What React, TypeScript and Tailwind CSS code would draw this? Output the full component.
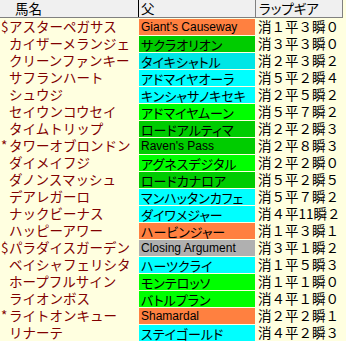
const ORANGE = 'bg-[#ff8040]';
const GREEN = 'bg-[#00ff00]';
const DARK_GREEN = 'bg-[#00cc00]';
const CYAN = 'bg-[#00ffff]';
const CYAN_DIM = 'bg-[#00e6e6]';
const GRAY = 'bg-[#b0b0b0]';

type Row = { mark: string; name: string; sire: string; latin?: boolean; color: string; gear: string };

const ROWS: Row[] = [
  { mark: '$', name: 'アスターペガサス', sire: "Giant's Causeway", latin: true, color: ORANGE, gear: '消１平３瞬０' },
  { mark: '', name: 'カイザーメランジェ', sire: 'サクラオリオン', color: DARK_GREEN, gear: '消３平３瞬０' },
  { mark: '', name: 'クリーンファンキー', sire: 'タイキシャトル', color: CYAN_DIM, gear: '消２平３瞬２' },
  { mark: '', name: 'サフランハート', sire: 'アドマイヤオーラ', color: CYAN, gear: '消５平２瞬４' },
  { mark: '', name: 'シュウジ', sire: 'キンシャサノキセキ', color: CYAN, gear: '消２平５瞬２' },
  { mark: '', name: 'セイウンコウセイ', sire: 'アドマイヤムーン', color: GREEN, gear: '消５平７瞬２' },
  { mark: '', name: 'タイムトリップ', sire: 'ロードアルティマ', color: DARK_GREEN, gear: '消２平２瞬３' },
  { mark: '*', name: 'タワーオブロンドン', sire: "Raven's Pass", latin: true, color: DARK_GREEN, gear: '消２平８瞬３' },
  { mark: '', name: 'ダイメイフジ', sire: 'アグネスデジタル', color: GREEN, gear: '消２平２瞬０' },
  { mark: '', name: 'ダノンスマッシュ', sire: 'ロードカナロア', color: DARK_GREEN, gear: '消５平２瞬５' },
  { mark: '', name: 'デアレガーロ', sire: 'マンハッタンカフェ', color: CYAN, gear: '消５平７瞬２' },
  { mark: '', name: 'ナックビーナス', sire: 'ダイワメジャー', color: CYAN, gear: '消４平11瞬２' },
  { mark: '', name: 'ハッピーアワー', sire: 'ハービンジャー', color: ORANGE, gear: '消１平３瞬１' },
  { mark: '$', name: 'パラダイスガーデン', sire: 'Closing Argument', latin: true, color: GRAY, gear: '消３平１瞬２' },
  { mark: '', name: 'ベイシャフェリシタ', sire: 'ハーツクライ', color: CYAN, gear: '消１平５瞬３' },
  { mark: '', name: 'ホープフルサイン', sire: 'モンテロッソ', color: GREEN, gear: '消１平１瞬０' },
  { mark: '', name: 'ライオンボス', sire: 'バトルプラン', color: GREEN, gear: '消４平１瞬０' },
  { mark: '*', name: 'ライトオンキュー', sire: 'Shamardal', latin: true, color: ORANGE, gear: '消２平２瞬１' },
  { mark: '', name: 'リナーテ', sire: 'ステイゴールド', color: CYAN, gear: '消４平２瞬３' },
];

export default function App() {
  return (
    <div className="h-[341px] w-[346px] overflow-hidden bg-[#ffffe0] font-['Noto_Sans_CJK_JP',sans-serif] text-[13.5px] leading-none">
      {/* header */}
      <div className="flex h-[18px] w-[343px] border-b border-r border-[#808080] bg-[#f0f0f0] text-black">
        <div className="flex w-[139px] items-center border-r border-black pl-[15px]">馬名</div>
        <div className="flex w-[117px] items-center border-r border-[#808080] pl-[2px]">父</div>
        <div className="flex flex-1 items-center pl-[3px] [font-feature-settings:'palt']">ラップギア</div>
      </div>

      {ROWS.map((r) => (
        <div key={r.name} className="flex h-[17px]">
          <div className="flex w-[139px] items-center pl-px text-[#800000]">
            <span className="w-[8px] shrink-0">{r.mark}</span>
            <span className="whitespace-nowrap">{r.name}</span>
          </div>
          <div className="pt-px">
            <div
              className={`flex h-4 w-[116px] items-center overflow-hidden whitespace-nowrap pl-[2px] text-black ${r.color} ${
                r.latin
                  ? "font-['Liberation_Sans',sans-serif] text-[12px]"
                  : "text-[13px] [font-feature-settings:'palt']"
              }`}
            >
              {r.sire}
            </div>
          </div>
          <div className="flex items-center whitespace-nowrap pl-[3px] text-black">{r.gear}</div>
        </div>
      ))}
    </div>
  );
}
